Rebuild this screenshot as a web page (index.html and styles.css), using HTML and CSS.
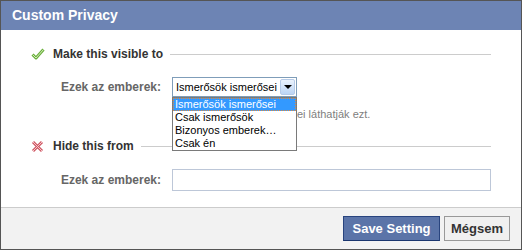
FILE: index.html
```html
<!DOCTYPE html>
<html>
<head>
    <title>Custom Privacy</title>
    <link rel="stylesheet" href="styles.css">
</head>
<body>
    <div class="dialog">
        <div class="header">Custom Privacy</div>
        <div class="content">
            <div class="section-title">
                <span class="icon">
                    <svg width="14" height="12" viewBox="0 0 14 12">
                        <path d="M1.5 6.5 L5 10 L12.5 1.5" fill="none" stroke="#6aae3e" stroke-width="3" stroke-linejoin="round"/>
                        <path d="M1.5 6.5 L5 10 L12.5 1.5" fill="none" stroke="#d2efb4" stroke-width="1"/>
                    </svg>
                </span>
                <span class="title-text">Make this visible to</span>
                <span class="rule"></span>
            </div>
            <div class="field">
                <label class="field-label">Ezek az emberek:</label>
                <div class="select">
                    <span class="select-value">Ismerősök ismerősei</span>
                    <span class="select-btn"><span class="arrow"></span></span>
                    <ul class="options">
                        <li class="selected">Ismerősök ismerősei</li>
                        <li>Csak ismerősök</li>
                        <li>Bizonyos emberek…</li>
                        <li>Csak én</li>
                    </ul>
                </div>
            </div>
            <div class="hint">ei láthatják ezt.</div>

            <div class="section-title second">
                <span class="icon">
                    <svg width="13" height="13" viewBox="0 0 13 13">
                        <path d="M2 2 L11 11 M11 2 L2 11" fill="none" stroke="#cf5a66" stroke-width="3"/>
                        <path d="M2 2 L11 11 M11 2 L2 11" fill="none" stroke="#f6c4c9" stroke-width="1"/>
                    </svg>
                </span>
                <span class="title-text">Hide this from</span>
                <span class="rule"></span>
            </div>
            <div class="field">
                <label class="field-label">Ezek az emberek:</label>
                <input class="text-input" type="text">
            </div>
        </div>
        <div class="footer">
            <button class="btn btn-primary">Save Setting</button>
            <button class="btn btn-cancel">Mégsem</button>
        </div>
    </div>
</body>
</html>
```

FILE: styles.css
```css
body {
    margin: 0;
    font-family: "Liberation Sans", Arial, sans-serif;
    font-size: 11px;
    background: #fff;
}

.dialog {
    width: 520px;
    height: 248px;
    border: 1px solid #555;
    display: flex;
    flex-direction: column;
}

.header {
    height: 29px;
    line-height: 28px;
    padding-left: 11px;
    background-color: #6d84b4;
    color: #fff;
    font-size: 14px;
    font-weight: bold;
}

.content {
    padding: 16px 30px 16px 30px;
}

.section-title {
    display: flex;
    align-items: center;
    height: 16px;
}

.section-title.second {
    margin-top: 17px;
}

.icon {
    width: 14px;
    margin-right: 8px;
    display: flex;
    align-items: center;
}

.title-text {
    font-size: 12px;
    font-weight: bold;
    color: #333;
    line-height: 16px;
}

.rule {
    flex: 1;
    height: 1px;
    background-color: #ccc;
    margin-left: 7px;
}

.field {
    display: grid;
    grid-template-columns: 130px 1fr;
    column-gap: 11px;
    align-items: center;
    margin-top: 15px;
}

.field-label {
    text-align: right;
    font-size: 12px;
    font-weight: bold;
    color: #666;
}

.select {
    position: relative;
    width: 123px;
    height: 18px;
    border: 1px solid #7f9db9;
    display: flex;
    align-items: center;
    background: #fff;
}

.select-value {
    flex: 1;
    padding-left: 3px;
    color: #000;
}

.select-btn {
    width: 15px;
    height: 16px;
    margin-right: 1px;
    border: 1px solid #b6cbe8;
    border-radius: 2px;
    box-sizing: border-box;
    background: linear-gradient(#eaf2fd, #bcd5f5);
    display: flex;
    align-items: center;
    justify-content: center;
}

.arrow {
    width: 0;
    height: 0;
    border-left: 4px solid transparent;
    border-right: 4px solid transparent;
    border-top: 4px solid #000;
}

.options {
    position: absolute;
    left: -1px;
    top: 19px;
    width: 123px;
    margin: 0;
    padding: 0;
    list-style: none;
    border: 1px solid #7a7a7a;
    background: #fff;
    z-index: 2;
}

.options li {
    height: 13px;
    line-height: 13px;
    padding-left: 2px;
    color: #000;
}

.options li.selected {
    height: 11px;
    line-height: 11px;
    background-color: #3399ff;
    color: #fff;
    border: 1px dotted #e08a3c;
    padding-left: 1px;
}

.hint {
    margin-top: 10px;
    margin-left: 266px;
    line-height: 14px;
    color: #808080;
}

.text-input {
    width: 319px;
    height: 22px;
    box-sizing: border-box;
    border: 1px solid #bdc7d8;
    margin: 0;
    padding: 2px 3px;
    font-family: inherit;
    font-size: 11px;
}

.footer {
    flex: 1;
    border-top: 1px solid #ccc;
    background-color: #f2f2f2;
    display: flex;
    justify-content: flex-end;
    align-items: center;
    gap: 4px;
    padding-right: 11px;
}

.btn {
    height: 25px;
    padding: 0;
    font-family: inherit;
    font-size: 13px;
    font-weight: bold;
    color: #333;
    background-color: #f0f0f0;
    border: 1px solid #999;
    cursor: pointer;
}

.btn-primary {
    width: 97px;
    color: #fff;
    background-color: #5b74a8;
    border-color: #29447e #29447e #1a356e;
}

.btn-cancel {
    width: 66px;
}
```
